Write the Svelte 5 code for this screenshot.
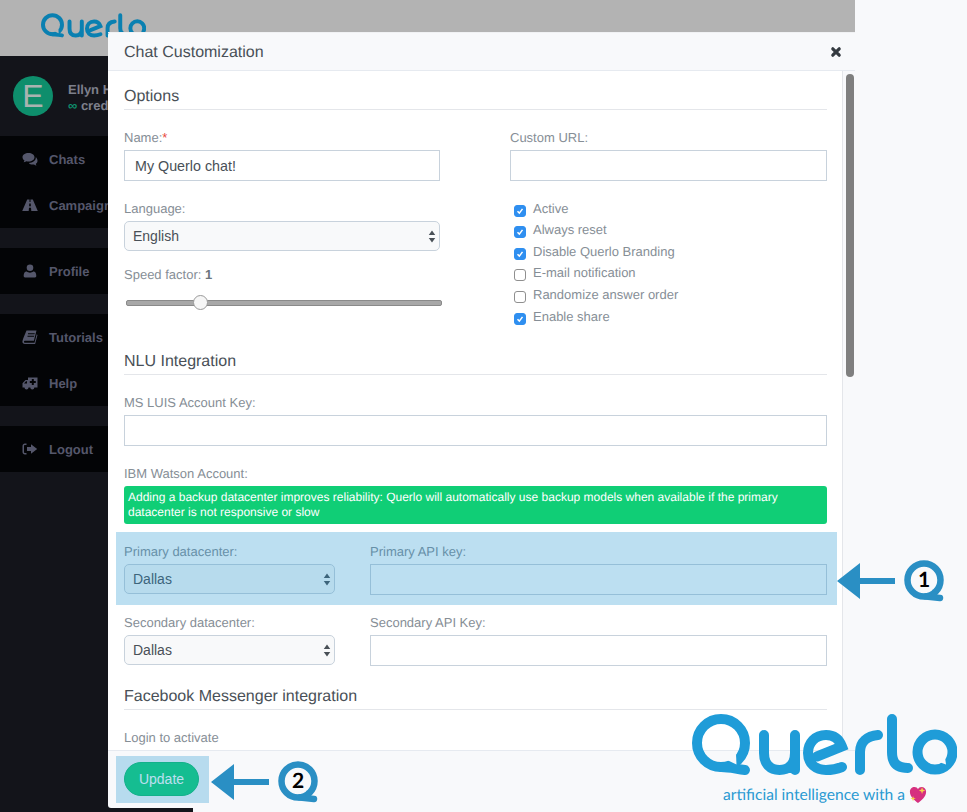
<script>
  const navGroups = [
    [{ label: 'Chats', icon: 'comments' }, { label: 'Campaigns', icon: 'road' }],
    [{ label: 'Profile', icon: 'user' }],
    [{ label: 'Tutorials', icon: 'book' }, { label: 'Help', icon: 'ambulance' }],
    [{ label: 'Logout', icon: 'signout' }]
  ]

  const checks = [
    { label: 'Active', on: true },
    { label: 'Always reset', on: true },
    { label: 'Disable Querlo Branding', on: true },
    { label: 'E-mail notification', on: false },
    { label: 'Randomize answer order', on: false },
    { label: 'Enable share', on: true }
  ]

  const datacenters = [
    { name: 'Primary datacenter:', key: 'Primary API key:' },
    { name: 'Secondary datacenter:', key: 'Secondary API Key:' }
  ]
</script>

{#snippet logo(cls)}
  <svg class={cls} viewBox="0 0 265 62" fill="none" stroke="currentColor" stroke-width="10" stroke-linecap="round" role="img" aria-label="Querlo">
    <circle cx="29" cy="29" r="24" />
    <path d="M29 53 C38 53 44 55 53 56" />
    <path class="hole" d="M35 46 L44 40 L44.500 50.500 Z" stroke="none" />
    <path d="M72 21 V39 C72 50 78 56 87.500 56 C97 56 103 50 103 39 V21 M103 39 V56" />
    <path d="M125 42.500 L150 32.500 C147 24.500 141 21 134 21 C123 21 116 29 116 39 C116 50 124 56 134 56 C140 56 145 55 150 53" />
    <path d="M168 56 V38 C168 28 175 22 186 21" />
    <path d="M200 5 V38 C200 49 205 54 216 54" />
    <circle cx="243" cy="38" r="17.500" />
    <path class="hole" d="M247 48 L253 43 L254 50.500 Z" stroke="none" />
  </svg>
{/snippet}

{#snippet navIcon(name)}
  <svg class="nav-icon" viewBox="0 0 16 16" fill="currentColor" aria-hidden="true">
    {#if name === 'comments'}
      <path d="M6.500 2C3 2 .500 3.800 .500 6.200c0 1.300.800 2.500 2 3.300-.200.700-.600 1.300-1 1.800 1 0 2-.500 2.800-1.100.700.200 1.400.300 2.200.300 3.400 0 6-1.900 6-4.300S9.900 2 6.500 2z" />
      <path d="M13.700 5.900c.100.200.100.500.100.800 0 2.900-2.900 5-7 5.200.800 1.100 2.200 1.700 3.800 1.700.500 0 1-.100 1.500-.200.600.500 1.300.900 2.400 1-.300-.400-.600-.900-.800-1.500 1.100-.700 1.800-1.700 1.800-2.900 0-1.700-.700-3.200-1.800-4.100z" />
    {:else if name === 'road'}
      <path d="M5.200 2.500h2.300v2.500h1V2.500h2.300L15.800 14H9.300l-.300-3.200H7L6.700 14H.200zM7.300 6.500 7.100 9.300h1.800l-.200-2.800z" fill-rule="evenodd" />
    {:else if name === 'user'}
      <circle cx="8" cy="4.800" r="3.300" />
      <path d="M3 14.500c-.800 0-1.300-.500-1.300-1.400 0-2.300.600-4.600 3-4.600.800.700 2 1.200 3.300 1.200s2.500-.500 3.300-1.200c2.400 0 3 2.300 3 4.600 0 .900-.500 1.400-1.300 1.400z" />
    {:else if name === 'book'}
      <path d="M4.500 1.500h10l-2.600 10.300H3.200c-.800 0-1.200.400-1.200 1s.400 1 1.200 1h9.300l2.200-8.500.800.600-2.400 9.100H3c-1.700 0-2.700-1-2.600-2.500.100-1 .600-2.500 1.300-4.300z M6 4.300v1h6.500l.300-1z M5.500 6.800v1H12l.300-1z" fill-rule="evenodd" />
    {:else if name === 'ambulance'}
      <path d="M6 2.500h9.500v10h-3.200a2 2 0 0 1-4 0H6.500a2 2 0 0 1-4 0H.500V8.300L3.500 5H6zM9.800 4v2h-2v2h2v2h2V8h2V6h-2V4zM4 6.300 2 8.500h3V6.300z" fill-rule="evenodd" />
      <circle cx="4.500" cy="12.700" r="1.100" />
      <circle cx="10.300" cy="12.700" r="1.100" />
    {:else}
      <path d="M4.500 2.500H3C1.500 2.500 .500 3.500 .500 5v6c0 1.500 1 2.500 2.500 2.500h1.500V12H3c-.600 0-1-.400-1-1V5c0-.600.400-1 1-1h1.500z" />
      <path d="M9 3.200 15.200 8 9 12.800V10H5V6h4z" />
    {/if}
  </svg>
{/snippet}

{#snippet arrows()}
  <svg class="select-arrows" viewBox="0 0 8 14" fill="currentColor" aria-hidden="true">
    <path d="M4 .500 7.500 5.500H.500zM4 13.500 .500 8.500h7z" />
  </svg>
{/snippet}

{#snippet badge(n, cls)}
  <div class={'callout ' + cls}>
    <svg class="arrow" viewBox="0 0 58 36" fill="#2a8fc4" aria-hidden="true">
      <path d="M0 18 23 0V15H58V21H23V36Z" />
    </svg>
    <div class="q-badge">
      <svg viewBox="0 0 42 42" fill="none" stroke="#2a8fc4" stroke-width="6.500" stroke-linecap="round" aria-hidden="true">
        <circle cx="20" cy="20" r="16.500" />
        <path d="M22 36.500 L36 38" />
        <path d="M29 29 L27 36 L34 36Z" fill="#2a8fc4" stroke="none" />
      </svg>
      <span>{n}</span>
    </div>
  </div>
{/snippet}

<div class="page">
  <div class="app">
    <header class="topbar">{@render logo('top-logo')}</header>
    <div class="under">
      <aside class="sidebar">
        <div class="user">
          <div class="avatar">E</div>
          <div class="who">
            <b>Ellyn H</b>
            <span><i>∞</i> credits</span>
          </div>
        </div>
        {#each navGroups as group}
          <nav class="group">
            {#each group as item}
              <div class="nav-item">{@render navIcon(item.icon)}{item.label}</div>
            {/each}
          </nav>
        {/each}
      </aside>
    </div>
  </div>

  <div class="modal">
    <div class="modal-head">
      <h5>Chat Customization</h5>
      <svg class="close" viewBox="0 0 12 12" aria-hidden="true">
        <path d="M2.800 2.800 9.200 9.200M9.200 2.800 2.800 9.200" stroke="#343a40" stroke-width="3.200" stroke-linecap="round" />
      </svg>
    </div>

    <div class="modal-body">
      <div class="form">
        <h4 class="first">Options</h4>
        <div class="two">
          <div>
            <div class="field">
              <label for="name">Name:<em>*</em></label>
              <input id="name" type="text" value="My Querlo chat!" />
            </div>
            <div class="field">
              <label for="lang">Language:</label>
              <div class="select">
                <select id="lang"><option>English</option></select>
                {@render arrows()}
              </div>
            </div>
            <div class="field speed">
              <label for="speed">Speed factor: <b>1</b></label>
              <input id="speed" class="range" type="range" min="0.1" max="4.2" step="0.1" value="1" />
            </div>
          </div>
          <div>
            <div class="field">
              <label for="url">Custom URL:</label>
              <input id="url" type="text" />
            </div>
            <div class="checks">
              {#each checks as c}
                <div class="check">
                  <span class={c.on ? 'box on' : 'box'}>
                    {#if c.on}
                      <svg viewBox="0 0 12 12" fill="none" stroke="#fff" stroke-width="1.800" aria-hidden="true"><path d="M3 6.200 5.200 8.500 9 3.500" /></svg>
                    {/if}
                  </span>
                  {c.label}
                </div>
              {/each}
            </div>
          </div>
        </div>

        <h4 class="nlu">NLU Integration</h4>
        <div class="field">
          <label for="luis">MS LUIS Account Key:</label>
          <input id="luis" type="text" />
        </div>
        <div class="field">
          <label for="ibm">IBM Watson Account:</label>
          <div id="ibm" class="alert">Adding a backup datacenter improves reliability: Querlo will automatically use backup models when available if the primary datacenter is not responsive or slow</div>
        </div>
        {#each datacenters as dc}
          <div class="dc-row">
            <div>
              <label for={dc.name}>{dc.name}</label>
              <div class="select">
                <select id={dc.name}><option>Dallas</option></select>
                {@render arrows()}
              </div>
            </div>
            <div>
              <label for={dc.key}>{dc.key}</label>
              <input id={dc.key} type="text" />
            </div>
          </div>
        {/each}

        <h4 class="fb">Facebook Messenger integration</h4>
        <div class="field"><label for="fb">Login to activate</label></div>
      </div>
      <div class="scrollbar"><div class="thumb"></div></div>
    </div>

    <div class="modal-foot">
      <button>Update</button>
    </div>
  </div>

  <div class="hl hl-keys"></div>
  <div class="hl hl-update"></div>

  {@render badge(1, 'one')}
  {@render badge(2, 'two-b')}

  <div class="brand">
    {@render logo('big-logo')}
    <div class="tagline">
      artificial intelligence with a
      <svg viewBox="0 0 20 20" aria-hidden="true">
        <path d="M10 19 C6 16 1 12 1 6.500 C1 3 3.500 1 6 1 C8 1 9.300 2 10 3.500 C10.700 2 12 1 14 1 C16.500 1 19 3 19 6.500 C19 12 14 16 10 19Z" fill="#d6307f" />
        <path d="M14.500 1 15.400 4 18 5 15.400 6 14.500 9 13.600 6 11 5 13.600 4Z" fill="#f7cf4a" />
        <path d="M4.500 11 5.300 13.300 7.500 14 5.300 14.700 4.500 17 3.700 14.700 1.500 14 3.700 13.300Z" fill="#f7cf4a" />
      </svg>
    </div>
  </div>
</div>

<style>
  :global(body) {
    background: #f8f9fb;
  }

  .page {
    position: relative;
    width: 967px;
    height: 812px;
    overflow: hidden;
    font-family: "Liberation Sans", Arial, sans-serif;
    font-size: 13px;
    color: #868e96;
    text-rendering: geometricPrecision;
  }

  .app {
    width: 855px;
  }
  .topbar {
    height: 56px;
    background: #b3b3b3;
    padding: 13px 0 0 41px;
    box-sizing: border-box;
    color: #0a80b1;
  }
  .top-logo {
    display: block;
    width: 105px;
    height: 25px;
  }
  .top-logo .hole {
    fill: #b3b3b3;
  }
  .under {
    height: 756px;
  }
  .sidebar {
    width: 193px;
    height: 100%;
    background: #13141a;
    color: #55576b;
    font-weight: bold;
  }
  .user {
    height: 80px;
    display: flex;
    align-items: center;
    padding-left: 13px;
    gap: 15px;
    box-sizing: border-box;
  }
  .avatar {
    width: 40px;
    height: 40px;
    border-radius: 50%;
    background: #0e8e6c;
    color: #a9b3b0;
    font-size: 32px;
    font-weight: normal;
    line-height: 40px;
    text-align: center;
  }
  .who {
    display: flex;
    flex-direction: column;
    gap: 1px;
    line-height: 15px;
    color: #7d7f8b;
    margin-top: 3px;
  }
  .who span i {
    color: #0e8e6c;
    font-style: normal;
  }
  .group {
    background: #030406;
    margin-bottom: 20px;
  }
  .nav-item {
    height: 46px;
    display: flex;
    align-items: center;
    padding-left: 22px;
    gap: 11px;
  }
  .nav-icon {
    width: 16px;
    height: 16px;
    flex: none;
  }

  .modal {
    position: absolute;
    left: 108px;
    top: 32px;
    width: 747px;
    height: 776px;
    background: #f8f9fb;
    display: flex;
    flex-direction: column;
    border-radius: 3px 0 0 3px;
  }
  .modal-head {
    height: 39px;
    flex: none;
    display: flex;
    align-items: center;
    justify-content: space-between;
    padding: 0 13px 0 16px;
    border-top: 1px solid #f1f2f4;
    border-bottom: 1px solid #e6eaf0;
    box-sizing: border-box;
  }
  h5 {
    margin: 2px 0 0;
    font-size: 16px;
    font-weight: normal;
    color: #495057;
  }
  .close {
    width: 12px;
    height: 12px;
  }
  .modal-body {
    flex: 1;
    display: flex;
    overflow: hidden;
    min-height: 0;
  }
  .form {
    width: 735px;
    box-sizing: border-box;
    padding: 0 15px 0 16px;
    background: #fff;
    border-right: 1px solid #e4e6ea;
    overflow: hidden;
  }
  .scrollbar {
    flex: 1;
    padding: 3px 1px 0 3px;
  }
  .thumb {
    height: 303px;
    background: #7f7f7f;
    border-radius: 4px;
  }

  h4 {
    margin: 21px 0 0;
    padding: 2px 0;
    font-size: 16px;
    line-height: 20px;
    font-weight: normal;
    color: #495057;
    border-bottom: 1px solid #e4e6ea;
  }
  h4.first {
    margin-top: 14px;
  }
  h4.nlu {
    margin-top: 23px;
  }
  h4.fb {
    margin-top: 19px;
  }
  .two {
    display: grid;
    grid-template-columns: 316px 317px;
    column-gap: 70px;
  }
  .field {
    margin-top: 17px;
  }
  .field.speed {
    margin-top: 13px;
  }
  label {
    display: block;
    line-height: 20px;
    padding-top: 1px;
    margin-bottom: 2px;
  }
  label em {
    color: #e8443a;
    font-style: normal;
  }
  label b {
    color: #6c757d;
  }
  input[type='text'] {
    display: block;
    width: 100%;
    height: 31px;
    box-sizing: border-box;
    border: 1px solid #c8d2dc;
    border-radius: 0;
    padding: 0 10px;
    font: 14.300px "Liberation Sans", Arial, sans-serif;
    color: #495057;
    background: #fff;
    outline: none;
  }
  .select {
    position: relative;
    color: #495057;
  }
  select {
    display: block;
    width: 100%;
    height: 30px;
    box-sizing: border-box;
    appearance: none;
    border: 1px solid #c8d2dc;
    border-radius: 5px;
    padding: 0 8px;
    font: 14px "Liberation Sans", Arial, sans-serif;
    color: #495057;
    background: #f8f9fa;
    outline: none;
  }
  .select-arrows {
    position: absolute;
    right: 4px;
    top: 9px;
    width: 8px;
    height: 13px;
    color: #495057;
  }
  .range {
    display: block;
    appearance: none;
    width: 316px;
    height: 16px;
    margin: 10px 0 0 2px;
    background: transparent;
  }
  .range::-webkit-slider-runnable-track {
    height: 4px;
    border-radius: 2px;
    background: #a8a8a8;
    border: 1px solid #8a8a8a;
    box-sizing: content-box;
  }
  .range::-webkit-slider-thumb {
    appearance: none;
    width: 15px;
    height: 15px;
    margin-top: -6px;
    border-radius: 50%;
    background: #f6f6f6;
    border: 1px solid #9a9a9a;
    box-sizing: border-box;
  }
  .checks {
    margin-top: 16.600px;
    padding-left: 4px;
  }
  .check {
    height: 21.600px;
    line-height: 21px;
    display: flex;
    gap: 7px;
    white-space: nowrap;
  }
  .box {
    width: 12px;
    height: 12px;
    margin-top: 7px;
    box-sizing: border-box;
    border: 1px solid #8f8f8f;
    border-radius: 3px;
    background: #fff;
    flex: none;
  }
  .box.on {
    background: #2f8ff0;
    border-color: #2f8ff0;
  }
  .box svg {
    display: block;
    width: 10px;
    height: 10px;
  }
  .alert {
    height: 38px;
    box-sizing: border-box;
    padding: 4px;
    font-size: 12px;
    line-height: 15px;
    color: #fff;
    background: #10ce76;
    border-radius: 3px;
  }
  .dc-row {
    display: grid;
    grid-template-columns: 211px 457px;
    column-gap: 35px;
    margin-top: 17px;
  }

  .modal-foot {
    height: 58px;
    flex: none;
    padding: 11px 16px 0;
    box-sizing: border-box;
    border-top: 1px solid #e6eaf0;
  }
  button {
    width: 75px;
    height: 34px;
    border: 1px solid #0ebd6c;
    border-radius: 17px;
    background: #10ce76;
    color: #fff;
    font: 14px "Liberation Sans", Arial, sans-serif;
    padding: 0;
  }

  .hl {
    position: absolute;
    background: rgba(33, 150, 210, 0.3);
  }
  .hl-keys {
    left: 116px;
    top: 532px;
    width: 721px;
    height: 73px;
  }
  .hl-update {
    left: 116px;
    top: 756px;
    width: 93px;
    height: 47px;
  }

  .callout {
    position: absolute;
    display: flex;
    align-items: center;
  }
  .callout.one {
    left: 837px;
    top: 560px;
  }
  .callout.two-b {
    left: 211px;
    top: 761px;
  }
  .arrow {
    width: 58px;
    height: 36px;
    display: block;
  }
  .q-badge {
    position: relative;
    width: 42px;
    height: 42px;
    margin-left: 9px;
  }
  .q-badge svg {
    display: block;
    width: 42px;
    height: 42px;
  }
  .q-badge span {
    position: absolute;
    left: 0;
    top: 0;
    width: 40px;
    text-align: center;
    font: bold 21px/40px "Lato", "Liberation Sans", sans-serif;
    color: #000;
  }

  .brand {
    position: absolute;
    left: 692px;
    top: 714px;
    width: 265px;
  }
  .big-logo {
    display: block;
    width: 265px;
    height: 62px;
    color: #1f9cd8;
  }
  .big-logo .hole {
    fill: #f8f9fb;
  }
  .tagline {
    display: flex;
    align-items: center;
    gap: 4px;
    margin: 9px 0 0 31px;
    font: 15.600px/20px "Lato", sans-serif;
    color: #2a9ad2;
    white-space: nowrap;
  }
  .tagline svg {
    width: 18px;
    height: 18px;
  }
</style>
